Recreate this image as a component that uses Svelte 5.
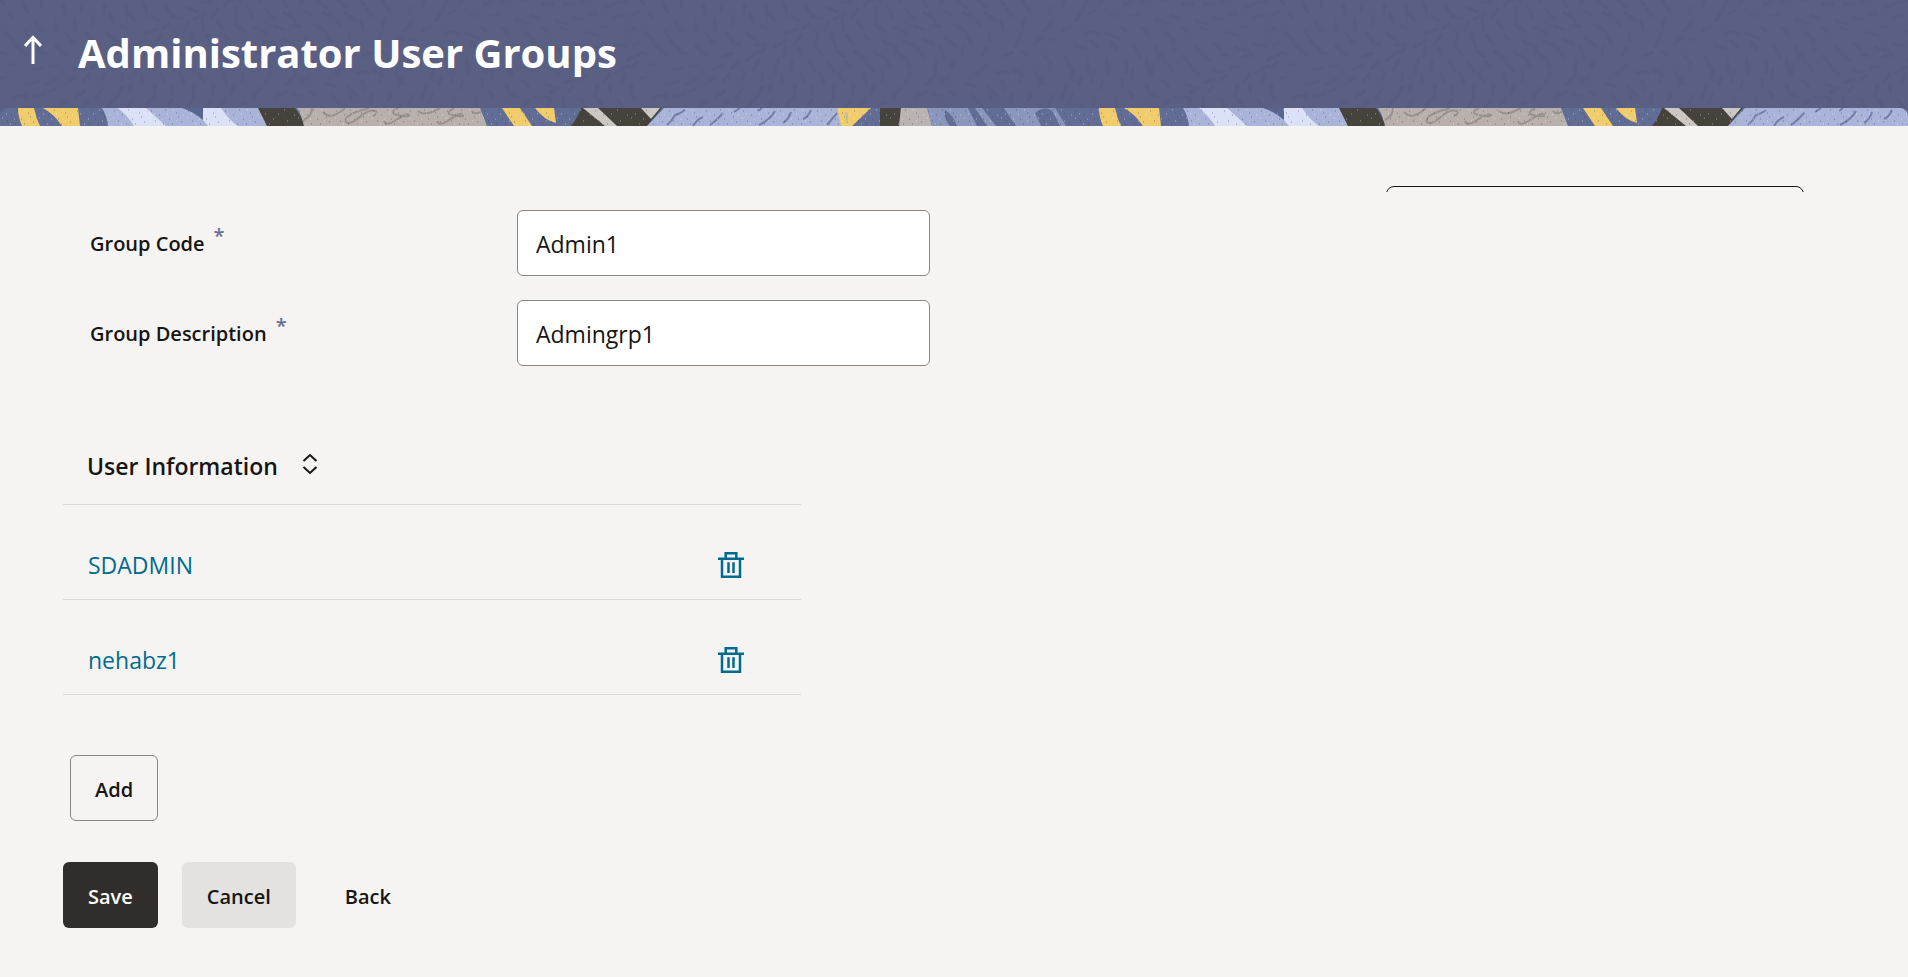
<script lang="ts">
    let groupCode = $state("Admin1");
    let groupDescription = $state("Admingrp1");
    let users = $state(["SDADMIN", "nehabz1"]);

    function removeUser(name: string) {
        users = users.filter((u) => u !== name);
    }

    function toggleSort() {
        users = [...users].reverse();
    }

    // short brush strokes that follow a slow wave, one per cell
    const strokes: string[] = [];
    for (let row = 0; row < 9; row++) {
        for (let col = 0; col < 32; col++) {
            const n = Math.abs(Math.sin(row * 71 + col * 37) * 1000) % 1;
            const x = col * 20 + (row % 2) * 9 + n * 7;
            const y = row * 13 + n * 8;
            const a = Math.sin(col / 3.3 + row / 4) * 1.3 + Math.cos(row / 2 + col / 7) * 1.1 - 0.4;
            const len = 5 + n * 9;
            strokes.push(`M${x.toFixed(1)} ${y.toFixed(1)}l${(Math.cos(a) * len).toFixed(1)} ${(Math.sin(a) * len).toFixed(1)}`);
        }
    }
</script>

<header>
    <svg class="texture" aria-hidden="true">
        <defs>
            <pattern id="strokes" width="640" height="117" patternUnits="userSpaceOnUse">
                <path d={strokes.join("")} fill="none" stroke="#535a7c" stroke-width="4" stroke-linecap="round" opacity="0.5" />
            </pattern>
        </defs>
        <rect width="100%" height="100%" fill="url(#strokes)" />
    </svg>
    <div class="title-bar">
        <button class="up" aria-label="Up">
            <svg width="18" height="30" viewBox="0 0 18 30" fill="none" stroke="#fff" stroke-width="3">
                <path d="M9 29V2M1 11L9 2.500L17 11" />
            </svg>
        </button>
        <h1>Administrator User Groups</h1>
    </div>
    <svg class="strip" aria-hidden="true">
        <defs>
            <pattern id="specks" width="37" height="18" patternUnits="userSpaceOnUse">
                <path d="M3 3h1M11 7h1M7 13h1M17 2h1M21 11h1M28 5h1M33 14h1M15 16h1M30 9h1M24 16h1" stroke="#2b3050" opacity="0.45" />
                <path d="M6 6h1M14 11h1M19 6h1M25 2h1M10 16h1M35 7h1M28 13h1M2 10h1" stroke="#fff" opacity="0.45" />
            </pattern>
            <pattern id="collage" width="1081" height="18" patternUnits="userSpaceOnUse">
                <rect width="1081" height="18" fill="#626d96" />
                <path d="M18 0H34Q36 10 40 18H22Q18 9 18 0zM43 0H78L80 18H62Q54 6 43 0zM502 0H520L532 18H514zM535 0H554L556 15Q544 12 535 0z" fill="#f0cc6c" />
                <path d="M102 0H260L267 18H108Q107 8 102 0z" fill="#a9b4d8" />
                <path d="M118 0H146L166 18H134Q128 8 118 0zM203 0H221Q229 12 238 18H208L203 12z" fill="#dbe1f6" />
                <path d="M182 0H203V12Q194 4 182 0z" fill="#5a658f" />
                <path d="M258 0H295Q302 9 304 18H267z" fill="#46423c" />
                <path d="M297 0H480L487 18H304Q302 8 297 0z" fill="#b8b0ac" />
                <path d="M304 12Q312 8 312 0M323 4Q331 13 345 0M366 0Q372 0 362 2Q343 8 346 14Q350 18 362 7Q370 1 376 3Q378 6 373 8M384 13Q386 19 396 12Q410 3 409 8Q404 9 394 6Q391 3 398 0M418 3Q424 8 434 3L440 0M437 13Q439 19 449 12Q464 2 463 8Q458 9 449 6Q448 3 454 0M472 3Q475 7 481 4" fill="none" stroke="#98918e" stroke-width="2" />
                <path d="M581 0H662L647 18H571Q577 11 581 0z" fill="#46423c" />
                <path d="M583 0H598L617 18H605zM641 0H660L651 11z" fill="#ccc7c2" />
                <path d="M664 0H837L842 18H647z" fill="#a9b4d8" />
                <path d="M685 2q-5 4 -10 5q-3 6 -8 10M703 9q-6 2 -10 9M723 5q-7 8 -13 12M740 0l-6 4M762 0l-4 3M775 3q-4 8 -16 14M791 4q-2 7 -8 11M811 2q-3 7 -8 9M837 5q-5 6 -10 12" fill="none" stroke="#7480aa" stroke-width="2" />
                <path d="M837 0H871L852 18H841z" fill="#f0cc6c" />
                <path d="M846 4q2 6 0 9" fill="none" stroke="#bcb9a5" stroke-width="2" />
                <path d="M880 0H901L899 18H880z" fill="#46423c" />
                <path d="M901 0H927L932 18H899z" fill="#b9b4b1" />
                <path d="M927 0H1055L1066 18H932z" fill="#8b96bc" />
                <path d="M945 2Q954 8 957 18H950Q943 10 945 2zM968 0H975L987 18H977zM982 0H1004L1016 18H996zM1035 5Q1046 -4 1053 4L1060 18H1041zM1056 0H1081V18H1068z" fill="#626d96" />
            </pattern>
        </defs>
        <rect width="100%" height="18" fill="url(#collage)" />
        <rect width="100%" height="18" fill="url(#specks)" />
    </svg>
</header>

<main>
    <div class="clipped"><div class="panel"></div></div>

    <form onsubmit={(e) => e.preventDefault()}>
        <div class="field">
            <label for="group-code">Group Code<span class="required">*</span></label>
            <input id="group-code" type="text" bind:value={groupCode} />
        </div>
        <div class="field">
            <label for="group-desc">Group Description<span class="required">*</span></label>
            <input id="group-desc" type="text" bind:value={groupDescription} />
        </div>

        <table>
            <thead>
                <tr>
                    <th colspan="2">
                        User Information
                        <button type="button" class="icon sort" aria-label="Sort" onclick={toggleSort}>
                            <svg width="16" height="22" viewBox="0 0 16 22" fill="none" stroke="#161513" stroke-width="2">
                                <path d="M1.500 8L8 2L14.500 8M1.500 14L8 20L14.500 14" />
                            </svg>
                        </button>
                    </th>
                </tr>
            </thead>
            <tbody>
                {#each users as user (user)}
                    <tr>
                        <td><a href="#{user}">{user}</a></td>
                        <td class="action">
                            <button type="button" class="icon" aria-label="Delete {user}" onclick={() => removeUser(user)}>
                                <svg width="26" height="26" viewBox="0 0 26 26" fill="none" stroke="#006b8f">
                                    <path d="M0 6.700H26M7.700 6.500V1.300H18.300V6.500M4 7V24.700H22V7" stroke-width="2.500" />
                                    <path d="M10.500 10.300V21M15.500 10.300V21" stroke-width="2.500" />
                                </svg>
                            </button>
                        </td>
                    </tr>
                {/each}
            </tbody>
        </table>

        <button type="button" class="btn outlined">Add</button>

        <div class="actions">
            <button type="submit" class="btn primary">Save</button>
            <button type="button" class="btn solid">Cancel</button>
            <button type="button" class="btn">Back</button>
        </div>
    </form>
</main>

<style>
    :global(body) {
        margin: 0;
        background: #f5f4f2;
        color: #161513;
        font-family: "Open Sans", "Noto Sans", sans-serif;
    }

    header {
        position: relative;
        background: #5a6084;
    }

    .texture {
        position: absolute;
        inset: 0;
        width: 100%;
        height: 100%;
    }

    .title-bar {
        position: relative;
        display: flex;
        align-items: center;
        gap: 36px;
        box-sizing: border-box;
        height: 108px;
        padding: 0 24px 4px;
    }

    .up {
        display: flex;
        padding: 0 0 4px;
        border: 0;
        background: none;
        cursor: pointer;
    }

    h1 {
        margin: 0;
        padding-top: 2px;
        font-size: 40px;
        font-weight: 700;
        line-height: 56px;
        color: #fff;
    }

    .strip {
        position: relative;
        display: block;
        width: 100%;
        height: 18px;
        border-radius: 8px 8px 0 0;
    }

    main {
        padding: 60px 63px 48px;
    }

    .clipped {
        width: 418px;
        height: 6px;
        margin: 0 41px 18px auto;
        overflow: hidden;
    }

    .panel {
        height: 60px;
        border: 1px solid #161513;
        border-radius: 8px;
    }

    .field {
        display: flex;
        align-items: center;
        margin: 0 0 24px 27px;
    }

    label {
        display: flex;
        width: 427px;
        padding-top: 2px;
        font-size: 20px;
        font-weight: 600;
        line-height: 28px;
    }

    .required {
        margin: -8px 0 0 9px;
        color: #646f96;
    }

    input {
        box-sizing: border-box;
        width: 413px;
        height: 66px;
        padding: 2px 18px 0;
        border: 1px solid #8b8580;
        border-radius: 6px;
        background: #fff;
        color: #161513;
        font-family: inherit;
        font-size: 23px;
    }

    table {
        width: 738px;
        max-width: 100%;
        margin-top: 62px;
        border-collapse: collapse;
        font-size: 23px;
    }

    th {
        height: 76px;
        padding: 0 24px;
        border-bottom: 1px solid #dcdad8;
        font-weight: 600;
        text-align: left;
    }

    td {
        height: 68px;
        padding: 26px 25px 0;
        border-bottom: 1px solid #dcdad8;
    }

    .action {
        width: 26px;
        padding-right: 57px;
    }

    a {
        color: #006b8f;
        text-decoration: none;
    }

    .icon {
        padding: 0;
        border: 0;
        background: none;
        cursor: pointer;
    }

    .icon svg {
        display: block;
    }

    .action .icon {
        display: block;
    }

    .sort {
        margin-left: 18px;
    }

    .btn {
        box-sizing: border-box;
        height: 66px;
        padding: 2px 24px 0;
        border: 1px solid transparent;
        border-radius: 6px;
        background: none;
        color: #161513;
        font-family: inherit;
        font-size: 20px;
        font-weight: 600;
        cursor: pointer;
    }

    .outlined {
        margin: 60px 7px 41px;
        border-color: #8b8580;
    }

    .actions {
        display: flex;
        gap: 24px;
    }

    .primary {
        background: #312d2a;
        color: #fff;
    }

    .solid {
        background: #e3e2e0;
    }
</style>
